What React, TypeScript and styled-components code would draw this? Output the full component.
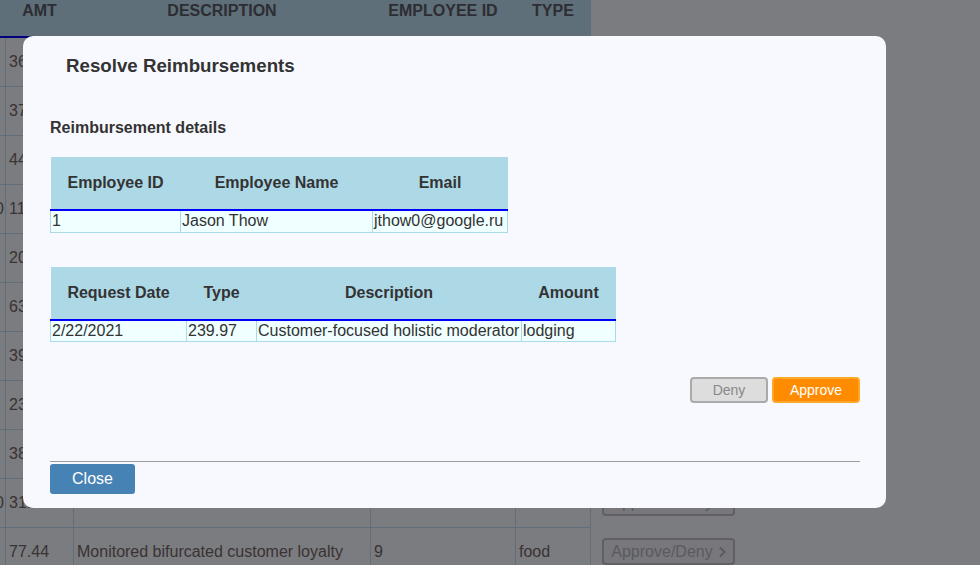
import React from "react";
import styled, { createGlobalStyle } from "styled-components";

const Global = createGlobalStyle`
  html, body {
    margin: 0;
    padding: 0;
    background: #f6f8ff;
    overflow: hidden;
  }
  body {
    font-family: "Liberation Sans", Arial, Helvetica, sans-serif;
  }
  * { box-sizing: border-box; }
`;

/* ---------- background page ---------- */

const Page = styled.div`
  width: 980px;
  height: 565px;
  overflow: hidden;
`;

const BgTable = styled.table`
  margin-left: -60px;
  width: 805px;
  table-layout: fixed;
  border-collapse: collapse;
  font-size: 16px;
`;

const Col = styled.col<{ $w: number }>`
  width: ${(p) => p.$w}px;
`;

const BgTh = styled.th<{ $plain?: boolean }>`
  height: 37px;
  padding: 2px 0 0;
  vertical-align: top;
  text-align: center;
  font-weight: bold;
  text-transform: uppercase;
  color: #5a5a66;
  background: ${(p) => (p.$plain ? "transparent" : "#bcdef2")};
  border-bottom: ${(p) => (p.$plain ? "none" : "2px solid #0000ff")};
`;

const BgTd = styled.td<{ $cut?: boolean; $action?: boolean }>`
  height: 49px;
  padding: ${(p) => (p.$cut ? "0 1px 0 0" : p.$action ? "0 0 0 11px" : "0 0 0 3px")};
  text-align: ${(p) => (p.$cut ? "right" : "left")};
  vertical-align: middle;
  color: #746668;
  white-space: nowrap;
  overflow: hidden;
  border: ${(p) => (p.$action ? "none" : "1px solid #bedcf0")};
`;

const RowButton = styled.button`
  width: 133px;
  height: 27px;
  padding: 0;
  border: 2px solid #bebec8;
  border-radius: 4px;
  background: #f0f0f8;
  color: #b4b4be;
  font-family: "Liberation Sans", Arial, sans-serif;
  font-size: 16px;
  display: flex;
  align-items: center;
  justify-content: center;
  gap: 5px;
`;

/* ---------- modal ---------- */

const Overlay = styled.div`
  position: fixed;
  inset: 0;
  background: rgba(0, 0, 0, 0.5);
  display: flex;
  align-items: flex-start;
  padding: 36px 0 0 23px;
`;

const Modal = styled.div`
  width: 863px;
  background: #f8f9fe;
  border-radius: 10px;
  padding: 19px 26px 14px 27px;
  color: #333;
  font-family: "Liberation Sans", Arial, sans-serif;
`;

const Title = styled.h3`
  margin: 0;
  padding-left: 16px;
  font-size: 18.72px;
  line-height: 22px;
  font-weight: bold;
  color: #333;
`;

const Subtitle = styled.h4`
  margin: 42px 0 0;
  font-size: 16px;
  line-height: 18px;
  font-weight: bold;
  color: #333;
`;

const DetailTable = styled.table<{ $w: number; $mt: number }>`
  margin-top: ${(p) => p.$mt}px;
  width: ${(p) => p.$w}px;
  table-layout: fixed;
  border-collapse: collapse;
  font-size: 16px;
  color: #333;
`;

const Th = styled.th`
  height: 53px;
  padding: 0;
  background: #add8e6;
  border-bottom: 2px solid #0000ff;
  font-weight: bold;
  text-align: center;
  vertical-align: middle;
  color: #333;
`;

const Td = styled.td`
  height: 22px;
  padding: 0 1px;
  line-height: 20px;
  background: #f0ffff;
  border: 1px solid #a9dbe6;
  text-align: left;
  white-space: nowrap;
  overflow: hidden;
  color: #333;
`;

const Actions = styled.div`
  margin-top: 35px;
  display: flex;
  justify-content: flex-end;
  gap: 4px;
`;

const ActionButton = styled.button<{ $variant: "deny" | "approve" }>`
  height: 26px;
  width: ${(p) => (p.$variant === "deny" ? 78 : 88)}px;
  padding: 0;
  border-radius: 4px;
  border: 2px solid ${(p) => (p.$variant === "deny" ? "#aaaaaa" : "#ffa726")};
  background: ${(p) => (p.$variant === "deny" ? "#dddddd" : "#ff8c00")};
  color: ${(p) => (p.$variant === "deny" ? "#888888" : "#ffffff")};
  font-family: "Liberation Sans", Arial, sans-serif;
  font-size: 14px;
`;

const Divider = styled.hr`
  margin: 58px 0 0;
  border: none;
  border-top: 1px solid #9c9c9c;
  height: 0;
`;

const CloseButton = styled.button`
  margin-top: 2px;
  width: 85px;
  height: 30px;
  padding: 0;
  border: none;
  border-radius: 3px;
  background: #4682b4;
  color: #ffffff;
  font-family: "Liberation Sans", Arial, sans-serif;
  font-size: 16px;
  display: block;
`;

const bgRows = [
  { id: "", amt: "36.25", desc: "Profound logistical hierarchy", emp: "4", type: "travel" },
  { id: "", amt: "37.90", desc: "Integrated dynamic framework", emp: "2", type: "food" },
  { id: "", amt: "44.12", desc: "Secured zero tolerance portal", emp: "7", type: "other" },
  { id: "10", amt: "11.48", desc: "Reactive static capability", emp: "10", type: "lodging" },
  { id: "", amt: "20.33", desc: "Universal neutral hub", emp: "5", type: "food" },
  { id: "", amt: "63.71", desc: "Grass-roots optimal analyzer", emp: "3", type: "travel" },
  { id: "", amt: "39.04", desc: "Adaptive encompassing solution", emp: "6", type: "other" },
  { id: "", amt: "23.56", desc: "Visionary national toolset", emp: "8", type: "food" },
  { id: "", amt: "38.80", desc: "Organic bottom-line matrix", emp: "1", type: "lodging" },
  { id: "10", amt: "31.17", desc: "Customizable 24/7 middleware", emp: "10", type: "travel" },
  { id: "", amt: "77.44", desc: "Monitored bifurcated customer loyalty", emp: "9", type: "food" },
];

const Chevron = () => (
  <svg width="8" height="12" viewBox="0 0 8 12" aria-hidden="true">
    <path d="M2 1.5 L6.5 6 L2 10.5" fill="none" stroke="currentColor" strokeWidth="2" />
  </svg>
);

export default function App() {
  return (
    <>
      <Global />
      <Page>
        <BgTable>
          <colgroup>
            <Col $w={65} />
            <Col $w={68} />
            <Col $w={297} />
            <Col $w={145} />
            <Col $w={75} />
            <Col $w={155} />
          </colgroup>
          <thead>
            <tr>
              <BgTh>ID</BgTh>
              <BgTh>Amt</BgTh>
              <BgTh>Description</BgTh>
              <BgTh>Employee ID</BgTh>
              <BgTh>Type</BgTh>
              <BgTh $plain />
            </tr>
          </thead>
          <tbody>
            {bgRows.map((r, i) => (
              <tr key={i}>
                <BgTd $cut>{r.id}</BgTd>
                <BgTd>{r.amt}</BgTd>
                <BgTd>{r.desc}</BgTd>
                <BgTd>{r.emp}</BgTd>
                <BgTd>{r.type}</BgTd>
                <BgTd $action>
                  <RowButton>
                    Approve/Deny <Chevron />
                  </RowButton>
                </BgTd>
              </tr>
            ))}
          </tbody>
        </BgTable>
      </Page>

      <Overlay>
        <Modal>
          <Title>Resolve Reimbursements</Title>
          <Subtitle>Reimbursement details</Subtitle>

          <DetailTable $w={457} $mt={20}>
            <colgroup>
              <Col $w={130} />
              <Col $w={192} />
              <Col $w={135} />
            </colgroup>
            <thead>
              <tr>
                <Th>Employee ID</Th>
                <Th>Employee Name</Th>
                <Th>Email</Th>
              </tr>
            </thead>
            <tbody>
              <tr>
                <Td>1</Td>
                <Td>Jason Thow</Td>
                <Td>jthow0@google.ru</Td>
              </tr>
            </tbody>
          </DetailTable>

          <DetailTable $w={565} $mt={34}>
            <colgroup>
              <Col $w={136} />
              <Col $w={70} />
              <Col $w={265} />
              <Col $w={94} />
            </colgroup>
            <thead>
              <tr>
                <Th>Request Date</Th>
                <Th>Type</Th>
                <Th>Description</Th>
                <Th>Amount</Th>
              </tr>
            </thead>
            <tbody>
              <tr>
                <Td>2/22/2021</Td>
                <Td>239.97</Td>
                <Td>Customer-focused holistic moderator</Td>
                <Td>lodging</Td>
              </tr>
            </tbody>
          </DetailTable>

          <Actions>
            <ActionButton $variant="deny">Deny</ActionButton>
            <ActionButton $variant="approve">Approve</ActionButton>
          </Actions>

          <Divider />
          <CloseButton>Close</CloseButton>
        </Modal>
      </Overlay>
    </>
  );
}
